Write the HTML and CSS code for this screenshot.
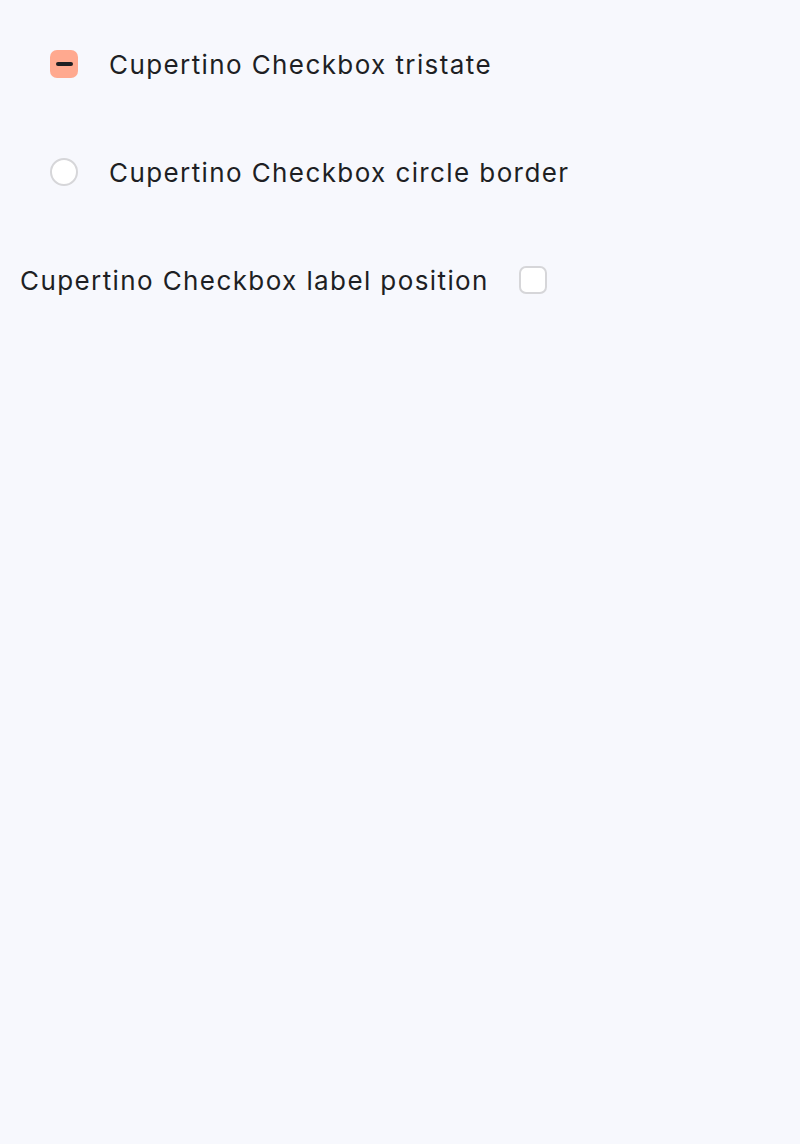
FILE: index.html
```html
<!DOCTYPE html>
<html>
<head>
<meta charset="utf-8">
<link rel="stylesheet" href="styles.css">
</head>
<body>
<div class="page">
  <div class="row indent">
    <span class="box tristate"><span class="dash"></span></span>
    <span class="label">Cupertino Checkbox tristate</span>
  </div>
  <div class="row indent">
    <span class="circle"></span>
    <span class="label">Cupertino Checkbox circle border</span>
  </div>
  <div class="row leading">
    <span class="label">Cupertino Checkbox label position</span>
    <span class="box empty"></span>
  </div>
</div>
</body>
</html>
```
FILE: styles.css
```css
html, body {
  margin: 0;
  padding: 0;
  background: #f7f8fd;
  height: 100%;
}
.page {
  display: flex;
  flex-direction: column;
  gap: 64px;
  padding-top: 42px;
  font-family: Inter, "Noto Sans", sans-serif;
  color: #1e1f24;
}
.row {
  display: flex;
  align-items: center;
  height: 44px;
  gap: 31px;
}
.indent { padding-left: 50px; }
.leading { padding-left: 20px; gap: 30px; }
.label {
  font-size: 26px;
  letter-spacing: 1.4px;
}
.box {
  width: 28px;
  height: 28px;
  box-sizing: border-box;
  border-radius: 7px;
  display: flex;
  align-items: center;
  justify-content: center;
  flex: none;
}
.tristate { background: #ffa98f; }
.dash {
  width: 17px;
  height: 4px;
  border-radius: 2px;
  background: #1f1f22;
}
.empty {
  background: #ffffff;
  border: 2px solid #d6d6d9;
}
.circle {
  width: 28px;
  height: 28px;
  box-sizing: border-box;
  border-radius: 50%;
  background: #ffffff;
  border: 2px solid #d6d6d9;
  flex: none;
}
```
